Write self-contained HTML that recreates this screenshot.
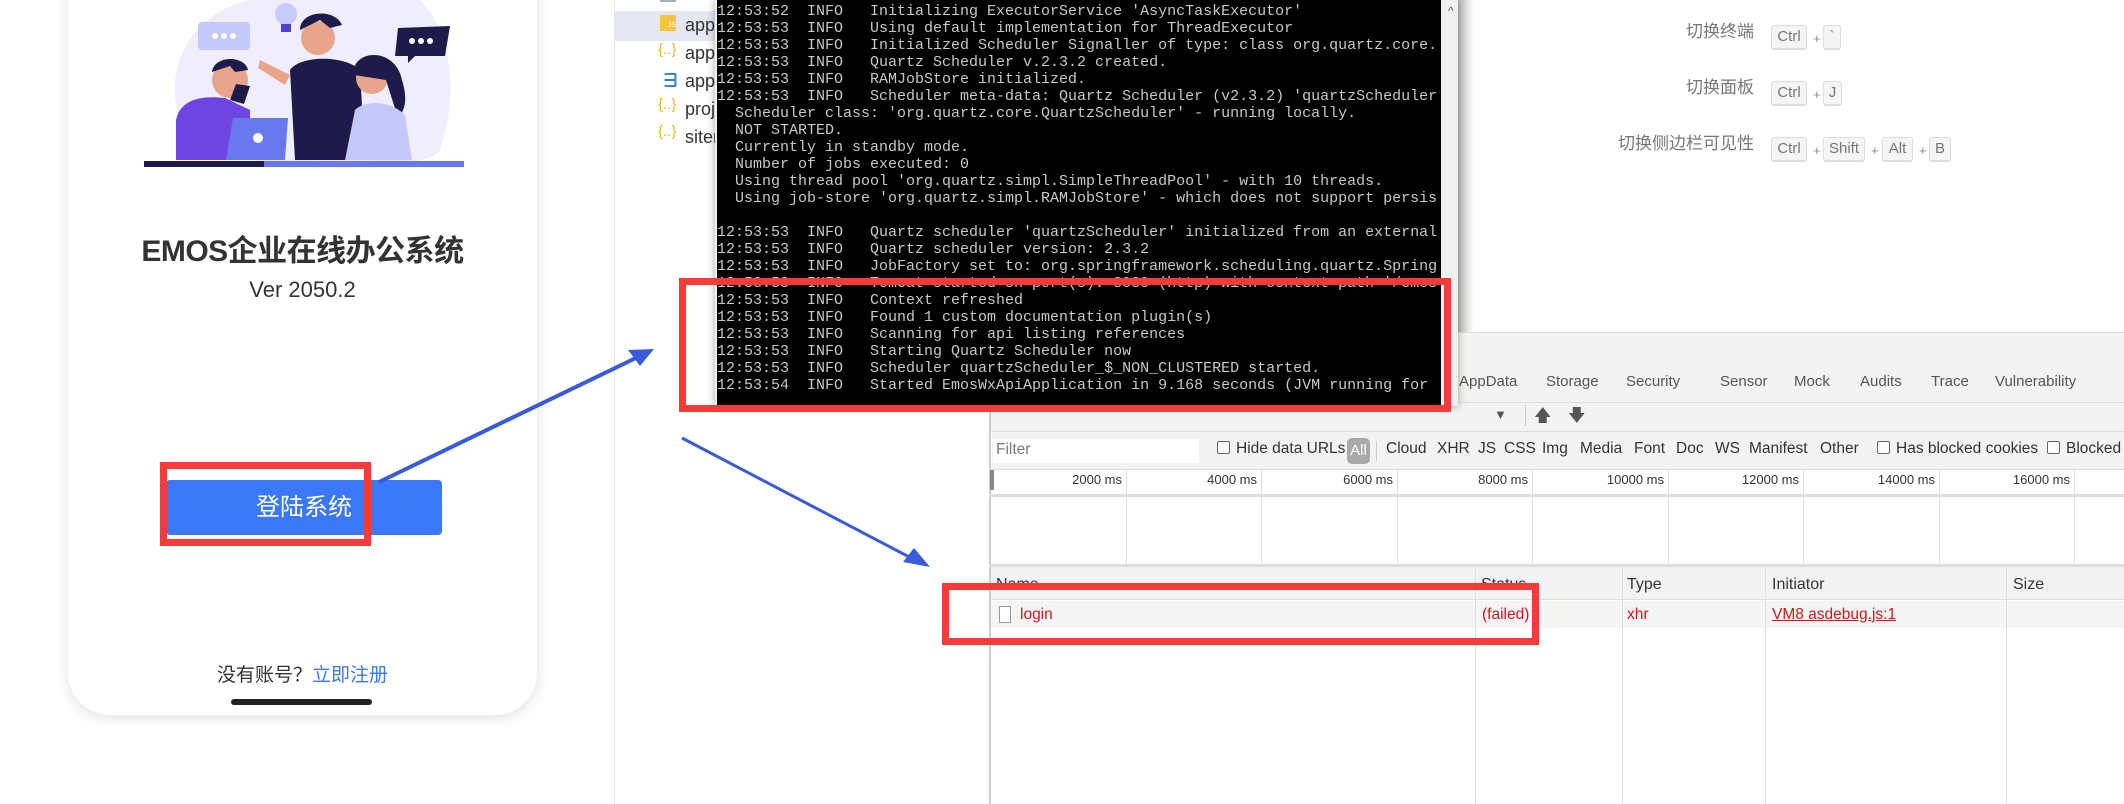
<!DOCTYPE html>
<html><head><meta charset="utf-8"><style>
*{margin:0;padding:0;box-sizing:border-box}
body{width:2124px;height:804px;position:relative;overflow:hidden;background:#fff;font-family:"Liberation Sans","Noto Sans CJK SC",sans-serif}
.a{position:absolute;white-space:nowrap}
.con{position:absolute;left:715px;top:0;width:743px;height:406px;background:#f0f0f0;box-shadow:0 0 8px rgba(0,0,0,.35)}
.blk{position:absolute;left:2px;top:0;width:724px;height:406px;background:#000;color:#c8c8c8;font-family:"Liberation Mono",monospace;font-size:15px;line-height:17px;padding-top:3px;white-space:pre;overflow:hidden}
.dt{font-size:16px;color:#333}
.tab{position:absolute;top:373px;font-size:15px;color:#555}
.fl{position:absolute;top:440px;font-size:15.5px;color:#333}
.cb{display:inline-block;width:13px;height:13px;border:1px solid #666;border-radius:2px;vertical-align:-1px;margin-right:6px;background:#fff}
.vl{position:absolute;width:1px;background:#e0e0e0}
.key{position:absolute;height:25px;border:1px solid #ddd;border-bottom-width:2px;border-radius:3px;background:#f5f5f5;color:#777;font-size:15px;line-height:22px;text-align:center}
.lbl{position:absolute;color:#777;font-size:17px;text-align:right;width:300px}
.plus{position:absolute;color:#888;font-size:13px}
.red{position:absolute;border:7px solid #f53a3a}
</style></head><body>

<div class="a" style="left:68px;top:-40px;width:469px;height:755px;background:#fff;border-radius:0 0 42px 42px;box-shadow:0 3px 14px rgba(0,0,0,.12)"></div>
<svg class="a" style="left:140px;top:0" width="330" height="190" viewBox="0 0 330 190">
<path d="M40 120 C20 60 60 10 110 0 L280 0 C310 30 320 90 300 150 C290 175 60 180 40 120Z" fill="#f0eefc"/>
<rect x="58" y="22" width="52" height="28" rx="4" fill="#c5c8fb"/><circle cx="75" cy="36" r="3" fill="#fff"/><circle cx="84" cy="36" r="3" fill="#fff"/><circle cx="93" cy="36" r="3" fill="#fff"/>
<path d="M258 28 L310 26 L305 56 L275 56 L268 63 L268 56 L255 56Z" fill="#1e1b4b"/><circle cx="272" cy="41" r="3" fill="#fff"/><circle cx="281" cy="41" r="3" fill="#fff"/><circle cx="290" cy="41" r="3" fill="#fff"/>
<circle cx="146" cy="14" r="11" fill="#c7cafc"/><rect x="141" y="24" width="10" height="8" fill="#4b3fd6"/>
<circle cx="90" cy="80" r="18" fill="#e8a58c"/><path d="M72 72 C74 55 105 55 108 70 L95 72 L90 66 Z" fill="#1e1b4b"/><path d="M96 84 L110 86 L104 104 L90 100Z" fill="#1e1b4b"/>
<path d="M36 120 C40 100 60 95 85 98 L110 110 L110 160 L36 160Z" fill="#6e45e0"/>
<circle cx="178" cy="38" r="17" fill="#e8a58c"/><path d="M160 30 C160 10 195 8 202 25 L190 28 L180 20Z" fill="#1e1b4b"/>
<path d="M150 70 C160 55 205 55 220 70 L225 160 L155 160Z" fill="#1e1b4b"/>
<path d="M120 60 L150 75 L145 85 L118 68Z" fill="#e8a58c"/>
<circle cx="232" cy="78" r="16" fill="#e8a58c"/><path d="M214 75 C210 50 255 45 262 80 C268 100 265 110 258 118 L246 80 Z" fill="#1e1b4b"/>
<path d="M215 110 C225 100 250 100 265 115 L272 160 L205 160Z" fill="#c5c8fb"/>
<path d="M93 118 L148 118 L145 160 L86 160Z" fill="#6a78ee"/><circle cx="118" cy="138" r="5" fill="#fff"/>
<rect x="4" y="161" width="320" height="6" fill="#6a78ee"/><rect x="4" y="161" width="120" height="6" fill="#1e1b4b"/>
</svg>
<div class="a" style="left:68px;width:469px;top:226px;text-align:center;font-size:30px;font-weight:bold;color:#333;letter-spacing:-0.5px">EMOS企业在线办公系统</div>
<div class="a" style="left:68px;width:469px;top:277px;text-align:center;font-size:22px;color:#333">Ver 2050.2</div>
<div class="a" style="left:166px;top:480px;width:276px;height:55px;background:#3a78f8;border-radius:4px;color:#fff;font-size:24px;line-height:55px;text-align:center">登陆系统</div>
<div class="red" style="left:160px;top:462px;width:211px;height:84px"></div>
<div class="a" style="left:217px;top:660px;font-size:19px;color:#333">没有账号？<span style="color:#3a78f8">立即注册</span></div>
<div class="a" style="left:231px;top:699px;width:141px;height:6px;background:#222;border-radius:3px"></div>

<div class="a" style="left:614px;top:0;width:1px;height:804px;background:#e5e5e5"></div>
<div class="a" style="left:615px;top:11px;width:110px;height:30px;background:#e4e6f1"></div>
<div class="a" style="left:660px;top:-8px;width:16px;height:10px;background:#a8b0bb"></div>
<div class="a" style="left:660px;top:15px;width:16px;height:16px;background:#f6c343;font-size:7px;color:#fff;text-align:right;line-height:22px">JS</div>
<div class="a" style="left:658px;top:41px;color:#f0b429;font-size:15px">{..}</div>
<div class="a" style="left:661px;top:66px;color:#2f7fd8;font-size:19px;font-weight:bold">∃</div>
<div class="a" style="left:658px;top:96px;color:#f0b429;font-size:15px">{..}</div>
<div class="a" style="left:658px;top:123px;color:#f0b429;font-size:15px">{..}</div>
<div class="a" style="left:685px;top:11px;font-size:18px;color:#333;line-height:28px">app.<br>app.<br>app.<br>proj<br>siten</div>

<div class="a" style="left:1458px;top:0;width:16px;height:332px;background:linear-gradient(90deg,#bbb,#fff)"></div>
<div class="lbl" style="left:1454px;top:17px">切换终端</div>
<div class="lbl" style="left:1454px;top:73px">切换面板</div>
<div class="lbl" style="left:1454px;top:129px">切换侧边栏可见性</div>
<div class="key" style="left:1771px;top:25px;width:36px">Ctrl</div><div class="plus" style="left:1813px;top:31px">+</div><div class="key" style="left:1823px;top:25px;width:18px">`</div>
<div class="key" style="left:1771px;top:81px;width:36px">Ctrl</div><div class="plus" style="left:1813px;top:87px">+</div><div class="key" style="left:1823px;top:81px;width:19px">J</div>
<div class="key" style="left:1771px;top:137px;width:36px">Ctrl</div><div class="plus" style="left:1813px;top:143px">+</div><div class="key" style="left:1823px;top:137px;width:42px">Shift</div><div class="plus" style="left:1871px;top:143px">+</div><div class="key" style="left:1882px;top:137px;width:31px">Alt</div><div class="plus" style="left:1919px;top:143px">+</div><div class="key" style="left:1929px;top:137px;width:22px">B</div>

<div class="a" style="left:989px;top:332px;width:1135px;height:472px;background:#fff"></div>
<div class="a" style="left:989px;top:332px;width:1135px;height:100px;background:#f3f3f3;border-top:1px solid #ddd"></div>
<div class="a" style="left:989px;top:402px;width:1135px;height:1px;background:#ddd"></div>
<div class="a" style="left:989px;top:431px;width:1135px;height:1px;background:#ddd"></div>
<div class="a" style="left:989px;top:332px;width:2px;height:472px;background:#ccc"></div>
<div class="tab" style="left:1459px">AppData</div><div class="tab" style="left:1546px">Storage</div><div class="tab" style="left:1626px">Security</div><div class="tab" style="left:1720px">Sensor</div><div class="tab" style="left:1794px">Mock</div><div class="tab" style="left:1860px">Audits</div><div class="tab" style="left:1931px">Trace</div><div class="tab" style="left:1995px">Vulnerability</div>
<div class="a" style="left:1494px;top:407px;font-size:13px;color:#555">▼</div>
<div class="a" style="left:1525px;top:404px;width:1px;height:22px;background:#ccc"></div>
<div class="a" style="left:1534px;top:403px;font-size:17px;color:#555">🡅</div>
<div class="a" style="left:1568px;top:403px;font-size:17px;color:#555">🡇</div>
<div class="a" style="left:992px;top:432px;width:1132px;height:38px;background:#f3f3f3"></div>
<div class="a" style="left:993px;top:439px;width:206px;height:24px;background:#fff;color:#777;font-size:15.5px;padding:2px 3px">Filter</div>
<div class="fl" style="left:1217px"><span class="cb"></span>Hide data URLs</div>
<div class="a" style="left:1347px;top:438px;width:23px;height:26px;background:#a9a9a9;border-radius:5px;color:#fff;font-size:15px;text-align:center;line-height:26px">All</div>
<div class="a" style="left:1376px;top:441px;width:1px;height:20px;background:#ccc"></div>
<div class="fl" style="left:1386px">Cloud</div><div class="fl" style="left:1437px">XHR</div><div class="fl" style="left:1478px">JS</div><div class="fl" style="left:1504px">CSS</div><div class="fl" style="left:1542px">Img</div><div class="fl" style="left:1580px">Media</div><div class="fl" style="left:1634px">Font</div><div class="fl" style="left:1676px">Doc</div><div class="fl" style="left:1715px">WS</div><div class="fl" style="left:1749px">Manifest</div><div class="fl" style="left:1820px">Other</div>
<div class="fl" style="left:1877px"><span class="cb"></span>Has blocked cookies</div>
<div class="fl" style="left:2047px"><span class="cb"></span>Blocked</div>
<div class="a" style="left:989px;top:469px;width:1135px;height:1px;background:#ddd"></div>
<div class="a" style="left:990px;top:470px;width:4px;height:20px;background:#888"></div>
<div class="a" style="left:989px;top:494px;width:1135px;height:3px;background:#ddd"></div>
<div class="a" style="left:989px;top:564px;width:1135px;height:3px;background:#ddd"></div>
<div class="vl" style="left:1126px;top:470px;height:94px"></div><div class="vl" style="left:1261px;top:470px;height:94px"></div><div class="vl" style="left:1397px;top:470px;height:94px"></div><div class="vl" style="left:1532px;top:470px;height:94px"></div><div class="vl" style="left:1668px;top:470px;height:94px"></div><div class="vl" style="left:1803px;top:470px;height:94px"></div><div class="vl" style="left:1939px;top:470px;height:94px"></div><div class="vl" style="left:2074px;top:470px;height:94px"></div>
<div class="a dt" style="left:1026px;width:96px;text-align:right;top:472px;font-size:13px">2000 ms</div>
<div class="a dt" style="left:1161px;width:96px;text-align:right;top:472px;font-size:13px">4000 ms</div>
<div class="a dt" style="left:1297px;width:96px;text-align:right;top:472px;font-size:13px">6000 ms</div>
<div class="a dt" style="left:1432px;width:96px;text-align:right;top:472px;font-size:13px">8000 ms</div>
<div class="a dt" style="left:1568px;width:96px;text-align:right;top:472px;font-size:13px">10000 ms</div>
<div class="a dt" style="left:1703px;width:96px;text-align:right;top:472px;font-size:13px">12000 ms</div>
<div class="a dt" style="left:1839px;width:96px;text-align:right;top:472px;font-size:13px">14000 ms</div>
<div class="a dt" style="left:1974px;width:96px;text-align:right;top:472px;font-size:13px">16000 ms</div>
<div class="a" style="left:991px;top:567px;width:1133px;height:33px;background:#f3f3f3;border-bottom:1px solid #ddd"></div>
<div class="a" style="left:991px;top:601px;width:1133px;height:27px;background:#f5f5f5"></div>
<div class="vl" style="left:1475px;top:567px;height:237px"></div><div class="vl" style="left:1622px;top:567px;height:237px"></div><div class="vl" style="left:1765px;top:567px;height:237px"></div><div class="vl" style="left:2006px;top:567px;height:237px"></div>
<div class="a dt" style="left:996px;top:576px">Name</div><div class="a dt" style="left:1481px;top:576px">Status</div>
<div class="a dt" style="left:1627px;top:576px">Type</div><div class="a dt" style="left:1772px;top:576px">Initiator</div><div class="a dt" style="left:2013px;top:576px">Size</div>
<div class="a" style="left:999px;top:606px;width:12px;height:17px;border:1px solid #999;background:#fff"></div>
<div class="a" style="left:1020px;top:606px;font-size:15.5px;color:#d8141a">login</div>
<div class="a" style="left:1482px;top:606px;font-size:15.5px;color:#d8141a">(failed)</div>
<div class="a" style="left:1627px;top:606px;font-size:15.5px;color:#d8141a">xhr</div>
<div class="a" style="left:1772px;top:606px;font-size:15.5px;color:#d8141a;text-decoration:underline">VM8 asdebug.js:1</div>
<div class="red" style="left:942px;top:583px;width:597px;height:62px"></div>

<div class="con"><div class="blk">12:53:52  INFO   Initializing ExecutorService 'AsyncTaskExecutor'
12:53:53  INFO   Using default implementation for ThreadExecutor
12:53:53  INFO   Initialized Scheduler Signaller of type: class org.quartz.core.
12:53:53  INFO   Quartz Scheduler v.2.3.2 created.
12:53:53  INFO   RAMJobStore initialized.
12:53:53  INFO   Scheduler meta-data: Quartz Scheduler (v2.3.2) 'quartzScheduler
  Scheduler class: 'org.quartz.core.QuartzScheduler' - running locally.
  NOT STARTED.
  Currently in standby mode.
  Number of jobs executed: 0
  Using thread pool 'org.quartz.simpl.SimpleThreadPool' - with 10 threads.
  Using job-store 'org.quartz.simpl.RAMJobStore' - which does not support persis

12:53:53  INFO   Quartz scheduler 'quartzScheduler' initialized from an external
12:53:53  INFO   Quartz scheduler version: 2.3.2
12:53:53  INFO   JobFactory set to: org.springframework.scheduling.quartz.Spring
12:53:53  INFO   Tomcat started on port(s): 8080 (http) with context path '/emos
12:53:53  INFO   Context refreshed
12:53:53  INFO   Found 1 custom documentation plugin(s)
12:53:53  INFO   Scanning for api listing references
12:53:53  INFO   Starting Quartz Scheduler now
12:53:53  INFO   Scheduler quartzScheduler_$_NON_CLUSTERED started.
12:53:54  INFO   Started EmosWxApiApplication in 9.168 seconds (JVM running for</div>
<div class="a" style="left:733px;top:4px;font-size:12px;color:#555">^</div></div>
<div class="red" style="left:679px;top:278px;width:772px;height:134px"></div>

<svg class="a" style="left:0;top:0" width="2124" height="804">
<path d="M379 482 L640 356" stroke="#3a5bd9" stroke-width="4" fill="none"/>
<path d="M654 349 L628 350 L640 366Z" fill="#3a5bd9"/>
<path d="M682 438 L915 560" stroke="#3a5bd9" stroke-width="3" fill="none"/>
<path d="M930 567 L903 562 L914 548Z" fill="#3a5bd9"/>
</svg>
</body></html>
